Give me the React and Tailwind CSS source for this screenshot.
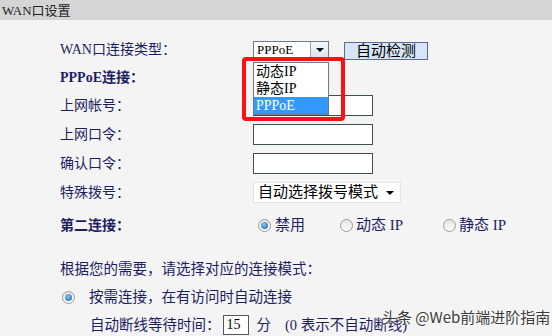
import React from "react";

const font = "font-['Liberation_Serif','Noto_Sans_CJK_SC',serif]";

const Radio = ({ checked }) => (
  <span className="inline-flex h-[13px] w-[13px] items-center justify-center rounded-full border border-[#9a9a9a] bg-gradient-to-b from-[#e6e6e6] to-[#fdfdfd]">
    {checked && <span className="h-[7px] w-[7px] rounded-full bg-[radial-gradient(circle_at_40%_35%,#8cc4f0,#1f5c9c)]" />}
  </span>
);

const Label = ({ children, bold }) => (
  <div className={`text-[14px] text-[#1d1d63] ${bold ? "font-bold" : ""}`}>{children}</div>
);

const TextInput = () => (
  <div className="h-[21px] w-[120px] border border-[#3f4f4f] bg-white" />
);

const App = () => {
  return (
    <div className={`relative h-[336px] w-[552px] overflow-hidden bg-[#f4f4f4] ${font}`}>
      {/* header */}
      <div className="flex h-[20px] items-center bg-[#d5d5d5] pl-[2px] text-[13px] leading-none text-[#222]">
        WAN口设置
      </div>

      {/* form */}
      <div className="grid grid-cols-[193px_1fr] items-center pl-[60px] pt-[19px]">
        <div className="flex h-[18px] items-center"><Label>WAN口连接类型：</Label></div>
        <div className="flex items-center gap-[15px]">
          <div className="flex h-[18px] w-[76px] border border-[#6e7a86] bg-white">
            <div className="flex flex-1 items-center pl-[3px] text-[13px] leading-none text-black">PPPoE</div>
            <div className="flex w-[18px] items-center justify-center border-l border-[#9aa6b2] bg-gradient-to-b from-[#f4f7fa] to-[#d9e2ec]">
              <span className="h-0 w-0 border-x-[4px] border-t-[4px] border-x-transparent border-t-black" />
            </div>
          </div>
          <div className="mt-[3px] flex h-[18px] w-[84px] items-center justify-center border border-[#5b6d88] bg-[#d6e6f8] text-[15px] leading-none text-black">
            自动检测
          </div>
        </div>

        <div className="flex h-[35px] items-center"><Label bold>PPPoE连接：</Label></div>
        <div />

        <div className="flex h-[21px] items-center"><Label>上网帐号：</Label></div>
        <TextInput />

        <div className="mt-[8px] flex h-[21px] items-center"><Label>上网口令：</Label></div>
        <div className="mt-[8px]"><TextInput /></div>

        <div className="mt-[8px] flex h-[21px] items-center"><Label>确认口令：</Label></div>
        <div className="mt-[8px]"><TextInput /></div>

        <div className="mt-[8px] flex h-[21px] items-center"><Label>特殊拨号：</Label></div>
        <div className="mt-[8px] flex h-[21px] w-[148px] items-center justify-between border border-[#e4e4e4] bg-white pl-[4px] pr-[6px] text-[15px] leading-none text-black">
          <span>自动选择拨号模式</span>
          <span className="h-0 w-0 border-x-[4px] border-t-[4px] border-x-transparent border-t-black" />
        </div>

        <div className="flex h-[44px] items-center"><Label bold>第二连接：</Label></div>
        <div className="flex h-[44px] items-center pl-[5px] text-[15px] text-[#1d1d63]">
          <div className="flex w-[82px] items-center gap-[4px]"><Radio checked />禁用</div>
          <div className="flex w-[103px] items-center gap-[3px]"><Radio />动态 IP</div>
          <div className="flex items-center gap-[3px]"><Radio />静态 IP</div>
        </div>
      </div>

      <div className="pl-[60px] pt-[8px] text-[14.5px] leading-[28px] text-[#1d1d63]">
        <div>根据您的需要，请选择对应的连接模式：</div>
        <div className="flex items-center gap-[14px] pl-[2px]">
          <Radio checked />
          <span>按需连接，在有访问时自动连接</span>
        </div>
        <div className="flex items-center pl-[30px]">
          <span>自动断线等待时间：</span>
          <span className="ml-[2px] flex h-[20px] w-[26px] items-center border border-[#4d5b5b] bg-white pl-[3px] text-[14px] leading-none text-black">15</span>
          <span className="ml-[8px]">分</span>
          <span className="ml-[14px]">(0 表示不自动断线)</span>
        </div>
      </div>

      {/* open dropdown list */}
      <div className="absolute left-[253px] top-[62px] w-[76px] border border-[#6e7a86] bg-white text-[14px] leading-[17px] text-black">
        <div className="pl-[2px]">动态IP</div>
        <div className="pl-[2px]">静态IP</div>
        <div className="bg-[#3399ff] pl-[2px] text-white">PPPoE</div>
      </div>

      {/* red highlight */}
      <div className="absolute left-[242px] top-[57px] h-[64px] w-[103px] rounded-[4px] border-[4px] border-[#ff1010]" />

      {/* watermark */}
      <div className="absolute left-[382px] top-[309px] font-['Noto_Sans_CJK_SC',sans-serif] text-[15px] leading-none text-[#3a3a3a] [text-shadow:0_0_2px_#fff,0_0_2px_#fff]">
        头条 @Web前端进阶指南
      </div>
    </div>
  );
};

export default App;
